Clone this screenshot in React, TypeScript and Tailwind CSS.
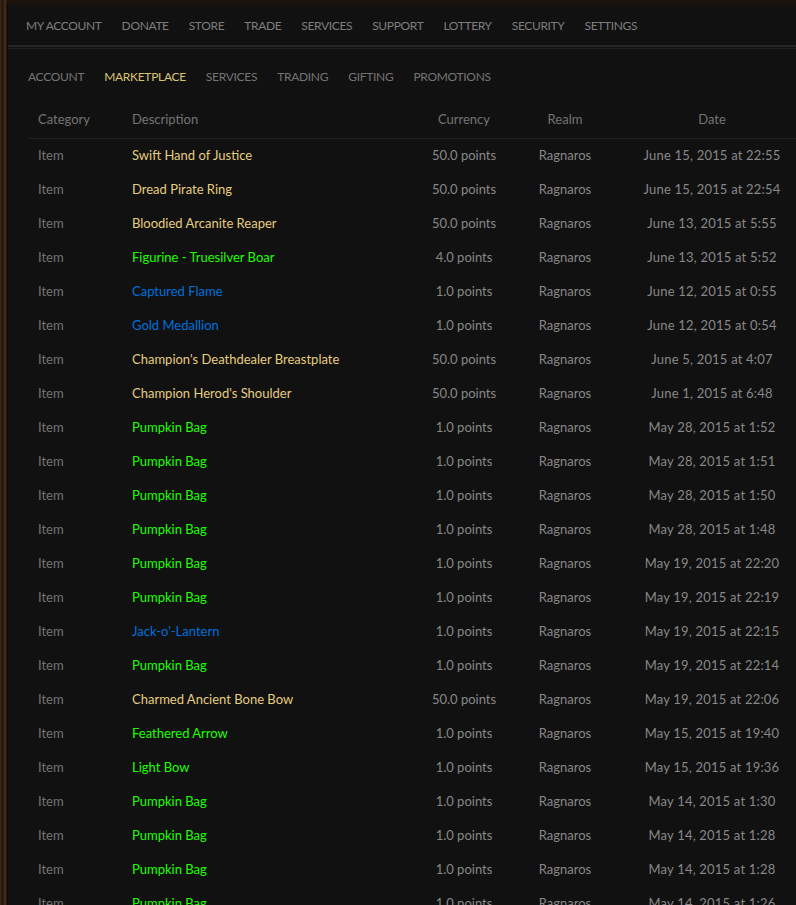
import React from 'react';

// filas del historial de compras
type Quality = 'legendary' | 'uncommon' | 'rare';

interface Purchase {
  name: string;
  quality: Quality;
  points: string;
  date: string;
}

const qualityColor: Record<Quality, string> = {
  legendary: 'text-[#e6cc80]',
  uncommon: 'text-[#1eff00]',
  rare: 'text-[#0070dd]',
};

const purchases: Purchase[] = [
  { name: 'Swift Hand of Justice', quality: 'legendary', points: '50.0 points', date: 'June 15, 2015 at 22:55' },
  { name: 'Dread Pirate Ring', quality: 'legendary', points: '50.0 points', date: 'June 15, 2015 at 22:54' },
  { name: 'Bloodied Arcanite Reaper', quality: 'legendary', points: '50.0 points', date: 'June 13, 2015 at 5:55' },
  { name: 'Figurine - Truesilver Boar', quality: 'uncommon', points: '4.0 points', date: 'June 13, 2015 at 5:52' },
  { name: 'Captured Flame', quality: 'rare', points: '1.0 points', date: 'June 12, 2015 at 0:55' },
  { name: 'Gold Medallion', quality: 'rare', points: '1.0 points', date: 'June 12, 2015 at 0:54' },
  { name: "Champion's Deathdealer Breastplate", quality: 'legendary', points: '50.0 points', date: 'June 5, 2015 at 4:07' },
  { name: "Champion Herod's Shoulder", quality: 'legendary', points: '50.0 points', date: 'June 1, 2015 at 6:48' },
  { name: 'Pumpkin Bag', quality: 'uncommon', points: '1.0 points', date: 'May 28, 2015 at 1:52' },
  { name: 'Pumpkin Bag', quality: 'uncommon', points: '1.0 points', date: 'May 28, 2015 at 1:51' },
  { name: 'Pumpkin Bag', quality: 'uncommon', points: '1.0 points', date: 'May 28, 2015 at 1:50' },
  { name: 'Pumpkin Bag', quality: 'uncommon', points: '1.0 points', date: 'May 28, 2015 at 1:48' },
  { name: 'Pumpkin Bag', quality: 'uncommon', points: '1.0 points', date: 'May 19, 2015 at 22:20' },
  { name: 'Pumpkin Bag', quality: 'uncommon', points: '1.0 points', date: 'May 19, 2015 at 22:19' },
  { name: "Jack-o'-Lantern", quality: 'rare', points: '1.0 points', date: 'May 19, 2015 at 22:15' },
  { name: 'Pumpkin Bag', quality: 'uncommon', points: '1.0 points', date: 'May 19, 2015 at 22:14' },
  { name: 'Charmed Ancient Bone Bow', quality: 'legendary', points: '50.0 points', date: 'May 19, 2015 at 22:06' },
  { name: 'Feathered Arrow', quality: 'uncommon', points: '1.0 points', date: 'May 15, 2015 at 19:40' },
  { name: 'Light Bow', quality: 'uncommon', points: '1.0 points', date: 'May 15, 2015 at 19:36' },
  { name: 'Pumpkin Bag', quality: 'uncommon', points: '1.0 points', date: 'May 14, 2015 at 1:30' },
  { name: 'Pumpkin Bag', quality: 'uncommon', points: '1.0 points', date: 'May 14, 2015 at 1:28' },
  { name: 'Pumpkin Bag', quality: 'uncommon', points: '1.0 points', date: 'May 14, 2015 at 1:28' },
  { name: 'Pumpkin Bag', quality: 'uncommon', points: '1.0 points', date: 'May 14, 2015 at 1:26' },
];

const mainNav = ['MY ACCOUNT', 'DONATE', 'STORE', 'TRADE', 'SERVICES', 'SUPPORT', 'LOTTERY', 'SECURITY', 'SETTINGS'];
const subNav = ['ACCOUNT', 'MARKETPLACE', 'SERVICES', 'TRADING', 'GIFTING', 'PROMOTIONS'];

const cols = 'grid grid-cols-[94px_292px_100px_102px_192px]';

export default function App() {
  return (
    <div className="w-[796px] h-[905px] overflow-hidden bg-[#2a1c12] font-['Lato',sans-serif]">
      <div className="w-[840px] h-full pt-[5px] pl-[7px] bg-[linear-gradient(90deg,#3b2717_0px,#21150d_3px,#4a3220_5px,#1a120b_7px)]">
        <div className="h-full bg-[#111111] border-l border-[#0a0a0a]">
          {/* menú principal */}
          <div className="flex gap-[20px] pl-[18px] pt-[2px] h-[40px] items-center text-[12px] tracking-[-0.35px] text-[#7e7e7e]">
            {mainNav.map((item) => (
              <span key={item}>{item}</span>
            ))}
          </div>
          <div className="h-[2px] bg-[#262626]" />
          <div className="h-[1px] mt-[1px] bg-[#222222]" />

          <div className="pl-[20px]">
            {/* submenú */}
            <div className="flex gap-[20px] h-[52px] items-center pt-[3px] text-[12px] tracking-[-0.3px] text-[#747474]">
              {subNav.map((item) => (
                <span key={item} className={item === 'MARKETPLACE' ? 'text-[#d9c56e]' : ''}>
                  {item}
                </span>
              ))}
            </div>

            {/* tabla */}
            <div className={`${cols} h-[38px] items-center text-[13px] text-[#747474] border-b border-[#222222]`}>
              <div className="pl-[10px]">Category</div>
              <div className="pl-[10px]">Description</div>
              <div className="text-center">Currency</div>
              <div className="text-center">Realm</div>
              <div className="text-center">Date</div>
            </div>
            {purchases.map((p, i) => (
              <div key={i} className={`${cols} h-[34px] items-center text-[13px]`}>
                <div className="pl-[10px] text-[#747474]">Item</div>
                <div className={`pl-[10px] ${qualityColor[p.quality]}`}>{p.name}</div>
                <div className="text-center text-[#888888]">{p.points}</div>
                <div className="text-center text-[#888888]">Ragnaros</div>
                <div className="text-center text-[#888888] tracking-[0.2px]">{p.date}</div>
              </div>
            ))}
          </div>
        </div>
      </div>
    </div>
  );
}
